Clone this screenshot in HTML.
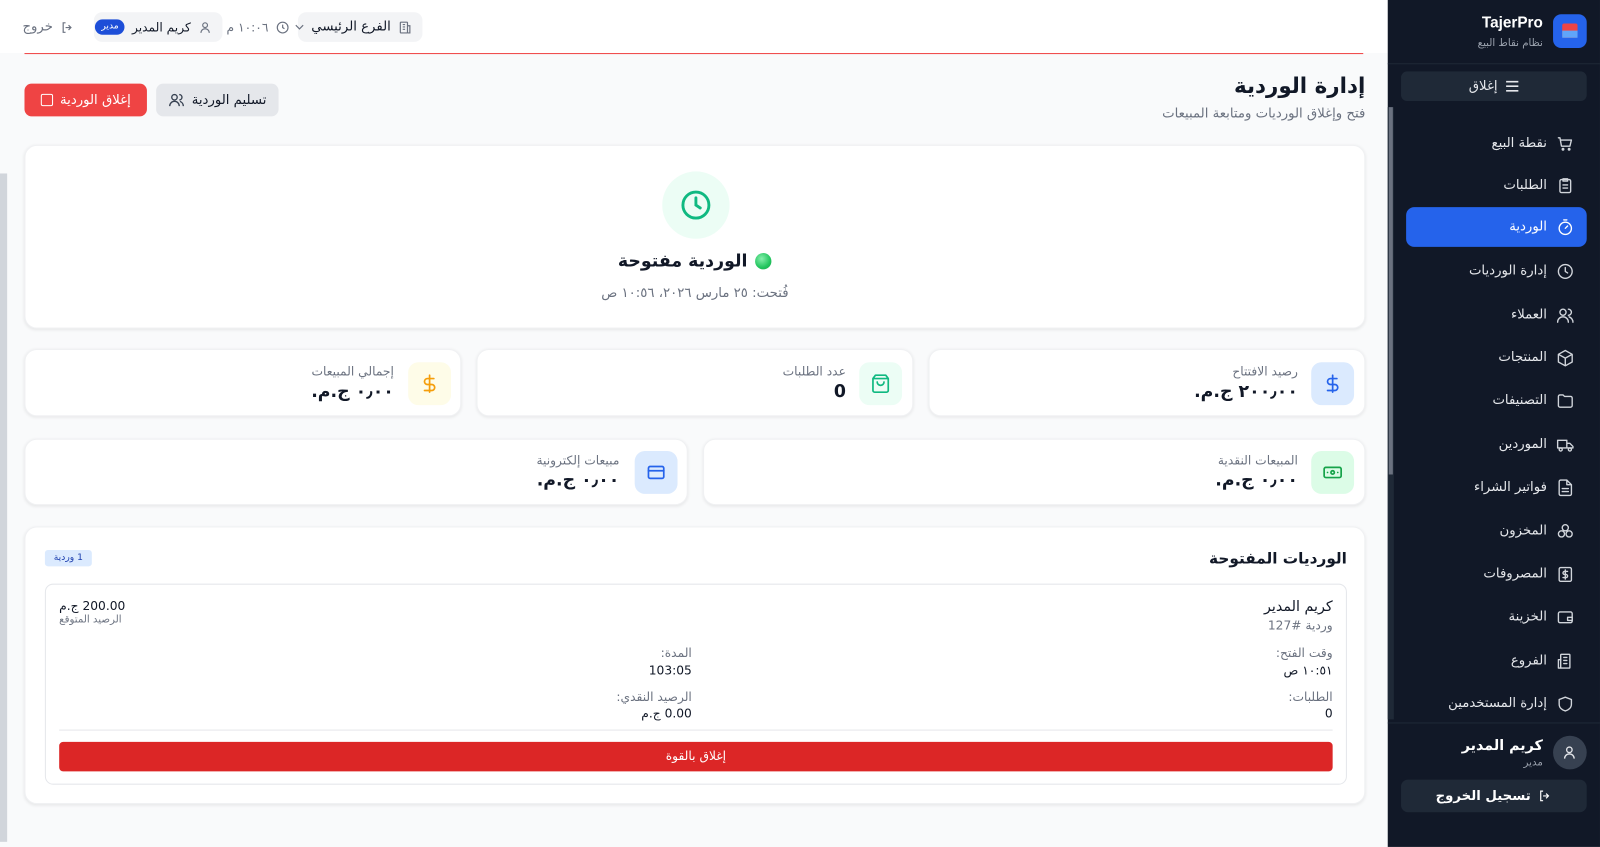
<!DOCTYPE html>
<html lang="ar" dir="rtl">
<head>
<meta charset="utf-8">
<style>
*{box-sizing:border-box;margin:0;padding:0}
html,body{width:1600px;height:825px;overflow:hidden;background:#f9fafb}
#w{position:absolute;left:0;top:0;width:1600px;height:825px;transform:scale(1.0204);transform-origin:0 0;font-family:"DejaVu Sans","Liberation Sans",sans-serif;color:#111827}
.a{position:absolute}
.t{white-space:nowrap}
svg{display:block;flex:none}
.card{position:absolute;background:#fff;border-radius:12px;box-shadow:0 1px 3px rgba(0,0,0,.08);border:1px solid #f0f1f3}
#sb{position:absolute;left:1360px;top:0;width:208px;height:830px;background:#111827}
.nav{position:absolute;right:13px;width:177px;height:39px;display:flex;align-items:center;gap:9px;padding-right:12px;color:#e5e7eb;font-size:13px;white-space:nowrap}
.nav svg{width:18px;height:18px;stroke:#d1d5db;fill:none;stroke-width:1.8;stroke-linecap:round;stroke-linejoin:round}
.ib{position:absolute;width:42px;height:42px;border-radius:10px;display:flex;align-items:center;justify-content:center}
.ib svg{width:20px;height:20px;fill:none;stroke-width:2;stroke-linecap:round;stroke-linejoin:round}
.lbl{position:absolute;font-size:12px;color:#6b7280;white-space:nowrap}
.val{position:absolute;font-size:17px;font-weight:bold;white-space:nowrap}
.s{font-size:12px;white-space:nowrap;position:absolute}
.pill{position:absolute;display:flex;align-items:center;gap:7px;white-space:nowrap}
</style>
</head>
<body>
<div id="w">
<!-- header -->
<div class="a" style="left:0;top:0;width:1360px;height:52px;background:#fff"></div>
<div class="a" style="left:24px;top:52px;width:1312px;height:1px;background:#ef4444"></div>
<div class="a" style="left:0;top:170px;width:7px;height:655px;background:#d1d5db"></div>

<div class="pill" style="left:292px;top:12px;width:122px;height:29px;background:#f3f4f6;border-radius:8px;padding:0 10px;font-size:13px">
<svg width="14" height="14" viewBox="0 0 24 24" fill="none" stroke="#6b7280" stroke-width="2"><rect x="4" y="3" width="12" height="18" rx="1"/><path d="M16 9h4v12h-4M8 7h4M8 11h4M8 15h4"/></svg>
<span style="margin-right:auto">الفرع الرئيسي</span>
<svg width="9" height="7" viewBox="0 0 10 6" fill="none" stroke="#6b7280" stroke-width="1.3"><path d="M1 1l4 4 4-4"/></svg>
</div>

<div class="pill" style="left:222px;top:12px;height:29px;font-size:12px;color:#6b7280">
<svg width="14" height="14" viewBox="0 0 24 24" fill="none" stroke="#6b7280" stroke-width="2"><circle cx="12" cy="12" r="9"/><path d="M12 7v5l3 2"/></svg>
<span>١٠:٠٦ م</span>
</div>

<div class="pill" style="left:92px;top:12px;width:126px;height:29px;background:#f3f4f6;border-radius:8px;padding:0 10px;font-size:12px">
<svg width="14" height="14" viewBox="0 0 24 24" fill="none" stroke="#6b7280" stroke-width="2"><circle cx="12" cy="8" r="4"/><path d="M5 21c0-4 3-7 7-7s7 3 7 7"/></svg>
<span>كريم المدير</span>
<span style="background:#1d4ed8;color:#fff;border-radius:8px;font-size:9px;padding:0 6px;line-height:15px">مدير</span>
</div>

<div class="pill" style="left:22px;top:12px;height:29px;font-size:13px;color:#6b7280">
<svg width="14" height="14" viewBox="0 0 24 24" fill="none" stroke="#6b7280" stroke-width="2"><path d="M9 4H5v16h4M14 8l4 4-4 4M18 12H9"/></svg>
<span>خروج</span>
</div>

<!-- title -->
<div class="a t" style="right:262px;top:72px;font-size:21px;font-weight:bold">إدارة الوردية</div>
<div class="a t" style="right:262px;top:104px;font-size:13px;color:#6b7280">فتح وإغلاق الورديات ومتابعة المبيعات</div>

<div class="pill" style="left:24px;top:82px;width:120px;height:32px;background:#ef4444;border-radius:7px;justify-content:center;color:#fff;font-size:13px">
<span>إغلاق الوردية</span>
<span style="width:12px;height:12px;border:1.6px solid #fff;border-radius:2px"></span>
</div>
<div class="pill" style="left:153px;top:82px;width:120px;height:32px;background:#e5e7eb;border-radius:7px;justify-content:center;font-size:13px">
<span>تسليم الوردية</span>
<svg width="16" height="16" viewBox="0 0 24 24" fill="none" stroke="#374151" stroke-width="2"><circle cx="9" cy="8" r="4"/><path d="M2 21c0-4 3-7 7-7s7 3 7 7M16 4a4 4 0 010 8M22 21c0-3-2-6-5-7"/></svg>
</div>

<!-- status card -->
<div class="card" style="left:24px;top:142px;width:1314px;height:180px"></div>
<div class="a" style="left:649px;top:168px;width:66px;height:66px;border-radius:50%;background:#ecfdf5"></div>
<svg class="a" style="left:665px;top:184px" width="34" height="34" viewBox="0 0 24 24" fill="none" stroke="#10b981" stroke-width="2" stroke-linecap="round"><circle cx="12" cy="12" r="9"/><path d="M12 7v5l3 2"/></svg>
<div class="pill" style="left:24px;width:1314px;top:246px;justify-content:center;gap:8px;font-size:17px;font-weight:bold">
<span style="width:16px;height:16px;border-radius:50%;background:radial-gradient(circle at 40% 35%,#86efac,#22c55e 60%,#16a34a)"></span>
<span>الوردية مفتوحة</span>
</div>
<div class="a t" style="left:24px;width:1314px;text-align:center;top:280px;font-size:13px;color:#6b7280">فُتحت: ٢٥ مارس ٢٠٢٦، ١٠:٥٦ ص</div>

<!-- stats row 1 -->
<div class="card" style="left:910px;top:342px;width:428px;height:66px"></div>
<div class="ib" style="left:1285px;top:355px;background:#dbeafe"><svg viewBox="0 0 24 24" stroke="#2563eb"><path d="M12 2v20M17 6H9.5a3.5 3.5 0 000 7h5a3.5 3.5 0 010 7H6"/></svg></div>
<div class="lbl" style="right:328px;top:357px">رصيد الافتتاح</div>
<div class="val" style="right:328px;top:374px">٢٠٠٫٠٠ ج.م.</div>

<div class="card" style="left:467px;top:342px;width:428px;height:66px"></div>
<div class="ib" style="left:842px;top:355px;background:#ecfdf5"><svg viewBox="0 0 24 24" stroke="#10b981"><path d="M6 2L3 6v14a2 2 0 002 2h14a2 2 0 002-2V6l-3-4zM3 6h18M16 10a4 4 0 01-8 0"/></svg></div>
<div class="lbl" style="right:771px;top:357px">عدد الطلبات</div>
<div class="val" style="right:771px;top:374px">0</div>

<div class="card" style="left:24px;top:342px;width:428px;height:66px"></div>
<div class="ib" style="left:400px;top:355px;background:#fefce8"><svg viewBox="0 0 24 24" stroke="#f59e0b"><path d="M12 2v20M17 6H9.5a3.5 3.5 0 000 7h5a3.5 3.5 0 010 7H6"/></svg></div>
<div class="lbl" style="right:1214px;top:357px">إجمالي المبيعات</div>
<div class="val" style="right:1214px;top:374px">٠٫٠٠ ج.م.</div>

<!-- stats row 2 -->
<div class="card" style="left:689px;top:430px;width:649px;height:65px"></div>
<div class="ib" style="left:1285px;top:442px;background:#dcfce7"><svg viewBox="0 0 24 24" stroke="#16a34a"><rect x="2" y="6" width="20" height="12" rx="2"/><circle cx="12" cy="12" r="2"/><path d="M6 12h.01M18 12h.01"/></svg></div>
<div class="lbl" style="right:328px;top:444px">المبيعات النقدية</div>
<div class="val" style="right:328px;top:461px">٠٫٠٠ ج.م.</div>

<div class="card" style="left:24px;top:430px;width:650px;height:65px"></div>
<div class="ib" style="left:622px;top:442px;background:#dbeafe"><svg viewBox="0 0 24 24" stroke="#2563eb"><rect x="3" y="5" width="18" height="14" rx="2"/><path d="M3 10h18"/></svg></div>
<div class="lbl" style="right:993px;top:444px">مبيعات إلكترونية</div>
<div class="val" style="right:993px;top:461px">٠٫٠٠ ج.م.</div>

<!-- open shifts -->
<div class="card" style="left:24px;top:516px;width:1314px;height:272px"></div>
<div class="a t" style="right:280px;top:538px;font-size:15px;font-weight:bold">الورديات المفتوحة</div>
<div class="a t" style="left:44px;top:539px;width:46px;height:16px;background:#dbeafe;color:#1e40af;font-size:9px;text-align:center;line-height:16px;border-radius:3px">1 وردية</div>
<div class="a" style="left:44px;top:572px;width:1276px;height:197px;border:1px solid #e5e7eb;border-radius:8px;background:#fff"></div>
<div class="s" style="right:294px;top:587px;font-size:14px">كريم المدير</div>
<div class="s" style="right:294px;top:606px;color:#6b7280">وردية #127</div>
<div class="s" style="left:58px;top:587px;font-size:12px">200.00 ج.م</div>
<div class="s" style="left:58px;top:602px;font-size:10px;color:#6b7280">الرصيد المتوقع</div>
<div class="s" style="right:294px;top:633px;color:#6b7280">وقت الفتح:</div>
<div class="s" style="right:294px;top:650px">١٠:٥١ ص</div>
<div class="s" style="right:922px;top:633px;color:#6b7280">المدة:</div>
<div class="s" style="right:922px;top:650px">103:05</div>
<div class="s" style="right:294px;top:676px;color:#6b7280">الطلبات:</div>
<div class="s" style="right:294px;top:692px">0</div>
<div class="s" style="right:922px;top:676px;color:#6b7280">الرصيد النقدي:</div>
<div class="s" style="right:922px;top:692px">0.00 ج.م</div>
<div class="a" style="left:58px;top:715px;width:1248px;height:1px;background:#e5e7eb"></div>
<div class="a t" style="left:58px;top:727px;width:1248px;height:29px;background:#dc2626;border-radius:4px;color:#fff;font-size:12px;text-align:center;line-height:29px">إغلاق بالقوة</div>

<!-- sidebar -->
<div id="sb">
<div class="a" style="left:0;top:105px;width:6px;height:600px;background:#1f2937"></div>
<div class="a" style="left:1px;top:105px;width:4px;height:360px;background:#6b7280"></div>
<div class="a" style="left:162px;top:14px;width:33px;height:33px;background:#2563eb;border-radius:8px"></div>
<div class="a" style="left:171px;top:23px;width:15px;height:14px;background:#ef4444;border-radius:2px"></div>
<div class="a" style="left:171px;top:30px;width:15px;height:7px;background:#60a5fa"></div>
<div class="a t" style="right:56px;top:14px;font-size:15px;font-weight:bold;color:#fff;font-family:'Liberation Sans',sans-serif">TajerPro</div>
<div class="a t" style="right:56px;top:37px;font-size:10px;color:#9ca3af">نظام نقاط البيع</div>
<div class="a" style="left:0;top:62px;width:208px;height:1px;background:#1f2937"></div>
<div class="pill" style="left:13px;top:70px;width:182px;height:29px;background:#1f2937;border-radius:6px;justify-content:center;font-size:13px;color:#e5e7eb">
<svg width="14" height="13" viewBox="0 0 14 13" stroke="#e5e7eb" stroke-width="1.6"><path d="M1 2h12M1 6.5h12M1 11h12"/></svg>
<span>إغلاق</span>
</div>

<div class="nav" style="top:121px"><svg viewBox="0 0 24 24"><path d="M3 4h2l2 11h11l2-8H6"/><circle cx="9" cy="19" r="1"/><circle cx="17" cy="19" r="1"/></svg>نقطة البيع</div>
<div class="nav" style="top:162px"><svg viewBox="0 0 24 24"><rect x="5" y="4" width="14" height="17" rx="2"/><path d="M9 3h6v3H9zM9 11h6M9 15h6"/></svg>الطلبات</div>
<div class="nav" style="top:203px;background:#2563eb;border-radius:8px;color:#fff"><svg viewBox="0 0 24 24" style="stroke:#fff"><circle cx="12" cy="13" r="8"/><path d="M12 13l3-3M10 2h4"/></svg>الوردية</div>
<div class="nav" style="top:246px"><svg viewBox="0 0 24 24"><circle cx="12" cy="12" r="9"/><path d="M12 7v5l3 2"/></svg>إدارة الورديات</div>
<div class="nav" style="top:289px"><svg viewBox="0 0 24 24"><circle cx="9" cy="8" r="4"/><path d="M2 21c0-4 3-7 7-7s7 3 7 7M16 4a4 4 0 010 8M22 21c0-3-2-6-5-7"/></svg>العملاء</div>
<div class="nav" style="top:331px"><svg viewBox="0 0 24 24"><path d="M12 2l9 5v10l-9 5-9-5V7zM3 7l9 5 9-5M12 12v10"/></svg>المنتجات</div>
<div class="nav" style="top:373px"><svg viewBox="0 0 24 24"><path d="M3 6a2 2 0 012-2h4l2 2h8a2 2 0 012 2v10a2 2 0 01-2 2H5a2 2 0 01-2-2z"/></svg>التصنيفات</div>
<div class="nav" style="top:416px"><svg viewBox="0 0 24 24"><path d="M2 6h12v10H2zM14 10h4l4 4v2h-8"/><circle cx="6" cy="18" r="2"/><circle cx="18" cy="18" r="2"/></svg>الموردين</div>
<div class="nav" style="top:458px"><svg viewBox="0 0 24 24"><path d="M14 2H6a2 2 0 00-2 2v16a2 2 0 002 2h12a2 2 0 002-2V8zM14 2v6h6M8 13h8M8 17h8"/></svg>فواتير الشراء</div>
<div class="nav" style="top:501px"><svg viewBox="0 0 24 24"><circle cx="12" cy="7" r="4"/><circle cx="7" cy="15" r="4"/><circle cx="17" cy="15" r="4"/></svg>المخزون</div>
<div class="nav" style="top:543px"><svg viewBox="0 0 24 24"><rect x="4" y="3" width="16" height="18" rx="2"/><path d="M12 6v12M15 8h-4a2 2 0 000 4h2a2 2 0 010 4H9"/></svg>المصروفات</div>
<div class="nav" style="top:585px"><svg viewBox="0 0 24 24"><rect x="3" y="5" width="18" height="14" rx="2"/><path d="M15 12h6v4h-6z"/></svg>الخزينة</div>
<div class="nav" style="top:628px"><svg viewBox="0 0 24 24"><rect x="6" y="3" width="12" height="18" rx="1"/><path d="M6 10H3v11h3M10 7h4M10 11h4M10 15h4"/></svg>الفروع</div>
<div class="nav" style="top:670px"><svg viewBox="0 0 24 24"><path d="M12 3l8 3v6c0 5-4 8-8 9-4-1-8-4-8-9V6z"/></svg>إدارة المستخدمين</div>

<div class="a" style="left:0;top:708px;width:208px;height:1px;background:#1f2937"></div>
<div class="a" style="left:162px;top:721px;width:33px;height:33px;border-radius:50%;background:#374151"></div>
<svg class="a" style="left:170px;top:729px" width="16" height="17" viewBox="0 0 24 24" fill="none" stroke="#e5e7eb" stroke-width="2"><circle cx="12" cy="8" r="4"/><path d="M5 21c0-4 3-7 7-7s7 3 7 7"/></svg>
<div class="a t" style="right:56px;top:723px;font-size:14px;font-weight:bold;color:#fff">كريم المدير</div>
<div class="a t" style="right:56px;top:742px;font-size:10px;color:#9ca3af">مدير</div>
<div class="pill" style="left:13px;top:764px;width:182px;height:32px;background:#1f2937;border-radius:7px;justify-content:center;font-size:13px;color:#fff;font-weight:bold">
<svg width="14" height="14" viewBox="0 0 24 24" fill="none" stroke="#fff" stroke-width="2"><path d="M9 4H5v16h4M14 8l4 4-4 4M18 12H9"/></svg>
<span>تسجيل الخروج</span>
</div>
</div>
</div>
</body>
</html>
